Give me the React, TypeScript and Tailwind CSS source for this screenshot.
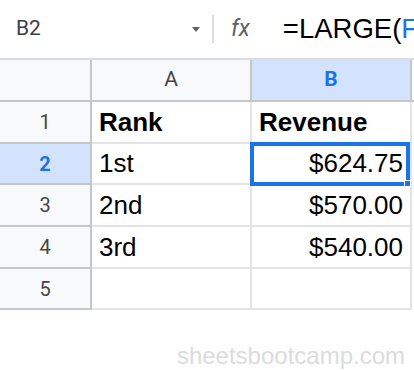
const rows = [
  { n: "1", a: "Rank", b: "Revenue", bold: true, h: "h-[42px]" },
  { n: "2", a: "1st", b: "$624.75", selected: true, h: "h-[41px]" },
  { n: "3", a: "2nd", b: "$570.00", h: "h-[42px]" },
  { n: "4", a: "3rd", b: "$540.00", h: "h-[42px]" },
  { n: "5", a: "", b: "", h: "h-[41px]" },
];

const cellFont = { fontFamily: '"Liberation Sans", Arial, sans-serif' };
const uiFont = { fontFamily: 'Roboto, "Noto Sans", sans-serif' };

export default function App() {
  return (
    <div className="w-[414px] h-[370px] bg-white overflow-hidden relative">
      {/* formula bar */}
      <div className="h-[60px] flex items-center border-b-2 border-[#dadce0] whitespace-nowrap">
        <div className="w-[212px] shrink-0 flex items-center pl-[16px] pr-[12px]">
          <span className="text-[21px] text-[#3c4043] flex-1" style={uiFont}>
            B2
          </span>
          <span className="w-0 h-0 border-l-[4px] border-r-[4px] border-t-[5px] border-l-transparent border-r-transparent border-t-[#5f6368]" />
        </div>
        <div className="w-[2px] h-[28px] shrink-0 bg-[#dadce0]" />
        <span className="ml-[17px] shrink-0 text-[23px] italic text-[#5f6368]" style={uiFont}>
          fx
        </span>
        <span className="ml-[33px] shrink-0 text-[27.5px] text-black" style={cellFont}>
          =LARGE(<span className="text-[#1a73e8]">F2:F</span>
        </span>
      </div>

      {/* grid */}
      <div className="relative">
        <div className="flex h-[42px] bg-[#f8f9fa] border-b-2 border-[#c4c7c5]">
          <div className="w-[92px] border-r-2 border-[#c4c7c5]" />
          <div
            className="w-[160px] border-r-2 border-[#c4c7c5] flex items-center justify-center text-[21px] text-[#444746]"
            style={uiFont}
          >
            A
          </div>
          <div
            className="w-[160px] border-r-2 border-[#c4c7c5] bg-[#d3e3fd] flex items-center justify-center text-[21px] font-bold text-[#1a73e8]"
            style={uiFont}
          >
            B
          </div>
        </div>

        {rows.map((r) => (
          <div key={r.n} className={`flex ${r.h}`}>
            <div
              className={`w-[92px] border-r-2 border-b-2 border-[#c4c7c5] flex items-center justify-center text-[20px] ${
                r.selected ? "bg-[#d3e3fd] text-[#1a73e8] font-bold" : "bg-[#f8f9fa] text-[#444746]"
              }`}
              style={uiFont}
            >
              {r.n}
            </div>
            <div
              className={`w-[160px] border-r-2 border-b-2 border-[#e2e3e3] flex items-center px-[7px] text-[26px] text-black ${
                r.bold ? "font-bold" : ""
              }`}
              style={cellFont}
            >
              {r.a}
            </div>
            <div
              className={`w-[160px] border-r-2 border-b-2 border-[#e2e3e3] flex items-center px-[7px] text-[26px] text-black ${
                r.bold ? "font-bold justify-start" : "justify-end"
              }`}
              style={cellFont}
            >
              {r.b}
            </div>
          </div>
        ))}

        {/* selection */}
        <div className="absolute left-[250px] top-[82px] w-[160px] h-[44px] border-[4px] border-[#1a73e8]">
          <div className="absolute -right-[5px] -bottom-[5px] w-[7px] h-[7px] bg-[#1a73e8] border border-white" />
        </div>
      </div>

      <div className="flex justify-end pr-[9px] pt-[28px]">
        <span className="text-[24px] text-[#dcdcdc]" style={cellFont}>
          sheetsbootcamp.com
        </span>
      </div>
    </div>
  );
}
